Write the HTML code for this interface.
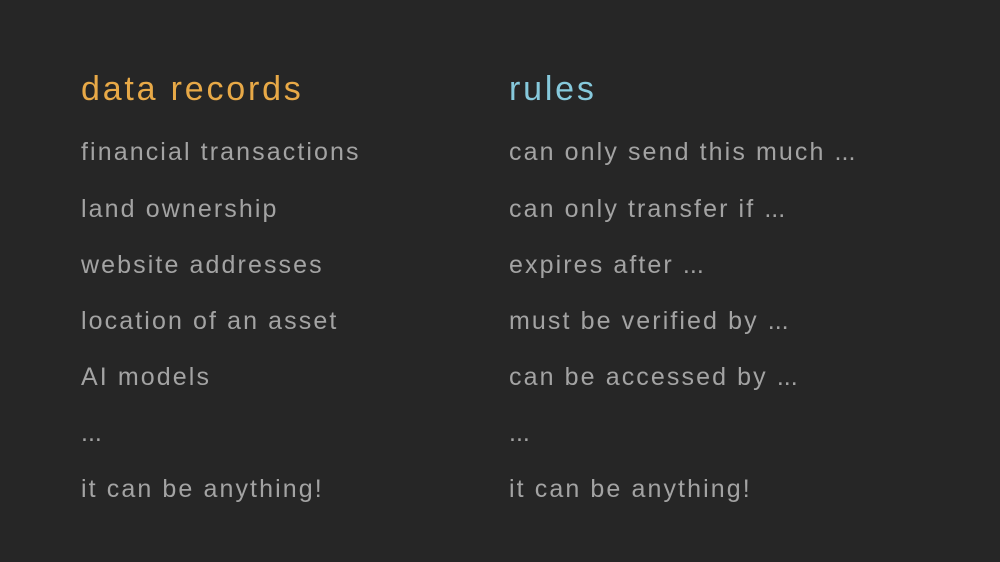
<!DOCTYPE html>
<html><head><style>
html,body{margin:0;padding:0;background:#262626;width:1000px;height:562px;overflow:hidden}
div{position:absolute;font-family:"Liberation Sans",sans-serif;white-space:nowrap}
.t{font-size:34px;line-height:34px;letter-spacing:2.8px}
.b{font-size:25px;line-height:25px;color:#a3a3a3;letter-spacing:2.1px}
.d,span{letter-spacing:0}
</style></head><body>
<div class="t" style="left:81px;top:72px;color:#e8a947">data records</div>
<div class="t" style="left:509px;top:72px;color:#86c9dc">rules</div>

<div class="b" style="left:81px;top:140px">financial transactions</div>
<div class="b" style="left:81px;top:197px">land ownership</div>
<div class="b" style="left:81px;top:253px">website addresses</div>
<div class="b" style="left:81px;top:309px">location of an asset</div>
<div class="b" style="left:81px;top:365px">AI models</div>
<div class="b d" style="left:81px;top:421px">...</div>
<div class="b" style="left:81px;top:477px">it can be anything!</div>

<div class="b" style="left:509px;top:140px">can only send this much <span>...</span></div>
<div class="b" style="left:509px;top:197px">can only transfer if <span>...</span></div>
<div class="b" style="left:509px;top:253px">expires after <span>...</span></div>
<div class="b" style="left:509px;top:309px">must be verified by <span>...</span></div>
<div class="b" style="left:509px;top:365px">can be accessed by <span>...</span></div>
<div class="b d" style="left:509px;top:421px">...</div>
<div class="b" style="left:509px;top:477px">it can be anything!</div>
</body></html>
